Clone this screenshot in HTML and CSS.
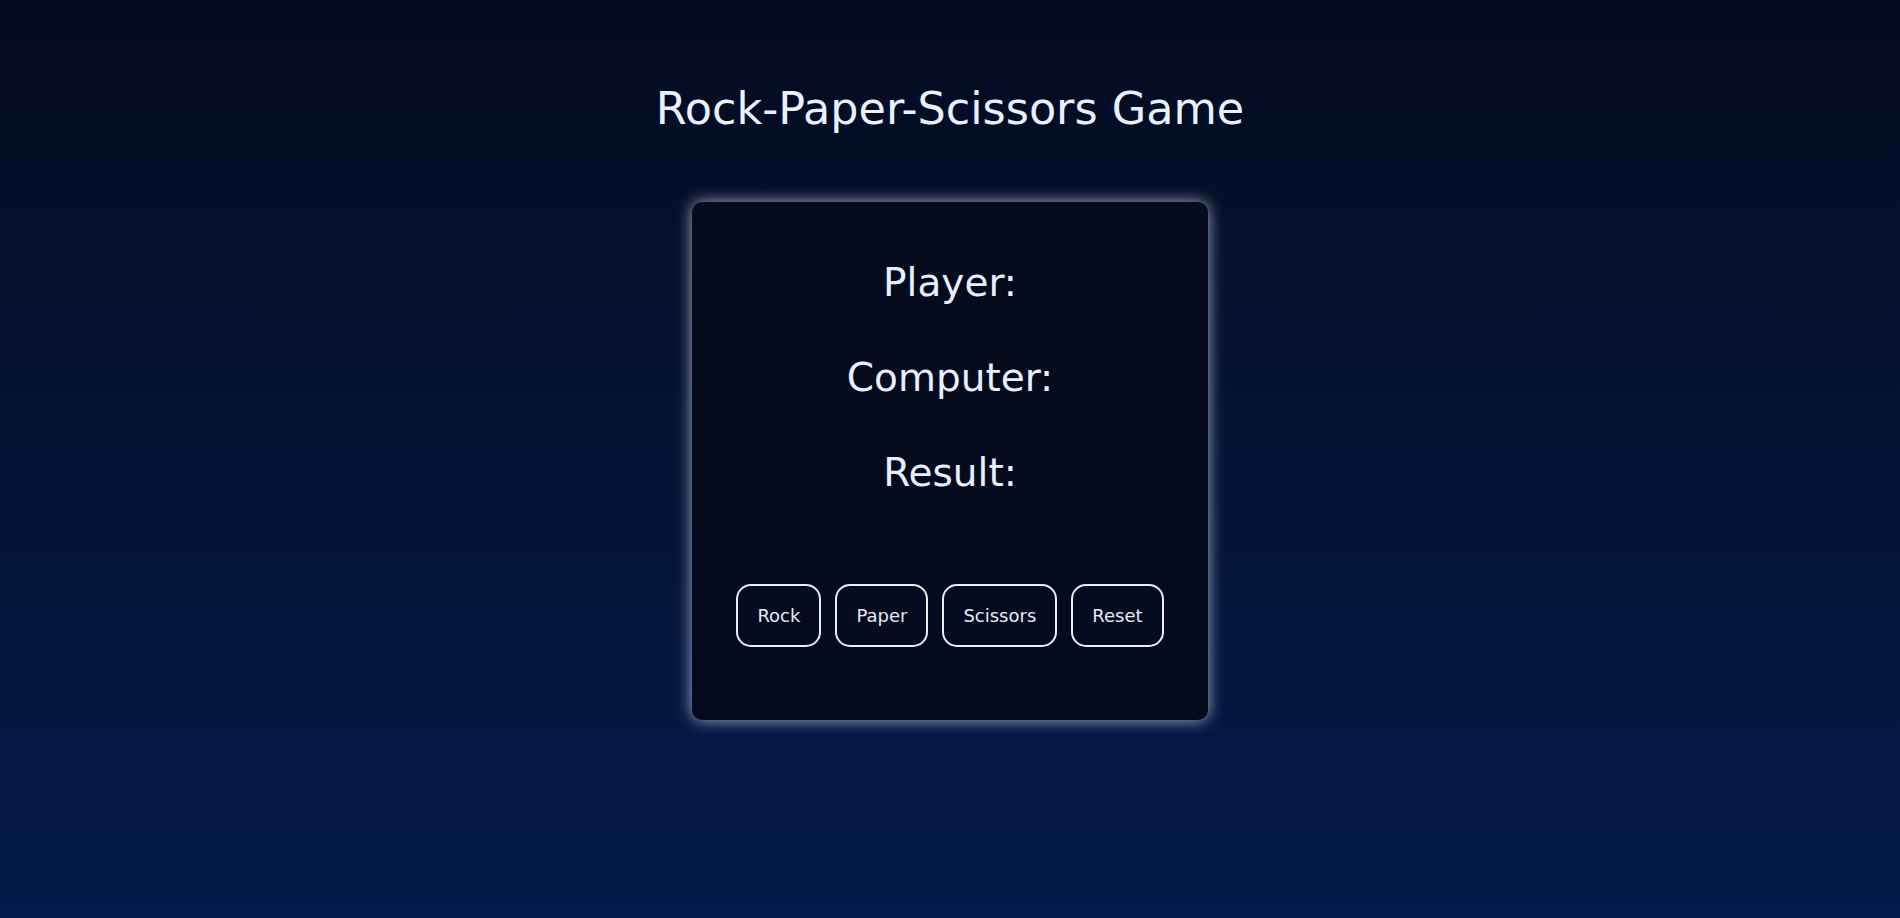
FILE: index.html
```html
<!DOCTYPE html>
<html lang="en">
<head>
<meta charset="utf-8">
<title>Rock-Paper-Scissors Game</title>
<link rel="stylesheet" href="styles.css">
</head>
<body>
<main class="page">
  <h1 class="title">Rock-Paper-Scissors Game</h1>
  <section class="card">
    <div class="stats">
      <h2 class="stat">Player:</h2>
      <h2 class="stat">Computer:</h2>
      <h2 class="stat">Result:</h2>
    </div>
    <div class="controls">
      <button class="btn">Rock</button>
      <button class="btn">Paper</button>
      <button class="btn">Scissors</button>
      <button class="btn">Reset</button>
    </div>
  </section>
</main>
</body>
</html>
```
FILE: styles.css
```css
html, body {
  margin: 0;
  height: 100%;
}
body {
  background: linear-gradient(180deg, #040b20 0%, #031a4a 100%);
  font-family: "DejaVu Sans", "Open Sans", sans-serif;
  color: #e6f0ff;
}
.page {
  display: flex;
  flex-direction: column;
  align-items: center;
  padding-top: 81px;
  gap: 65px;
}
.title {
  margin: 0;
  font-size: 44.5px;
  font-weight: 400;
  line-height: 56px;
  color: #e8f2ff;
}
.card {
  width: 516px;
  height: 518px;
  box-sizing: border-box;
  background: #050b1d;
  border-radius: 10px;
  box-shadow: 0 0 16px rgba(235, 242, 255, 0.7);
  display: flex;
  flex-direction: column;
  align-items: center;
  padding-top: 57px;
}
.stats {
  display: flex;
  flex-direction: column;
  align-items: center;
  gap: 47px;
}
.stat {
  margin: 0;
  font-size: 39px;
  font-weight: 400;
  line-height: 48px;
}
.controls {
  margin-top: 87px;
  display: flex;
  gap: 14px;
}
.btn {
  font-family: inherit;
  font-size: 18px;
  line-height: 22px;
  color: #e4ecf8;
  background: transparent;
  border: 2px solid #e8eef8;
  border-radius: 15px;
  padding: 18.5px 19px;
}
```
